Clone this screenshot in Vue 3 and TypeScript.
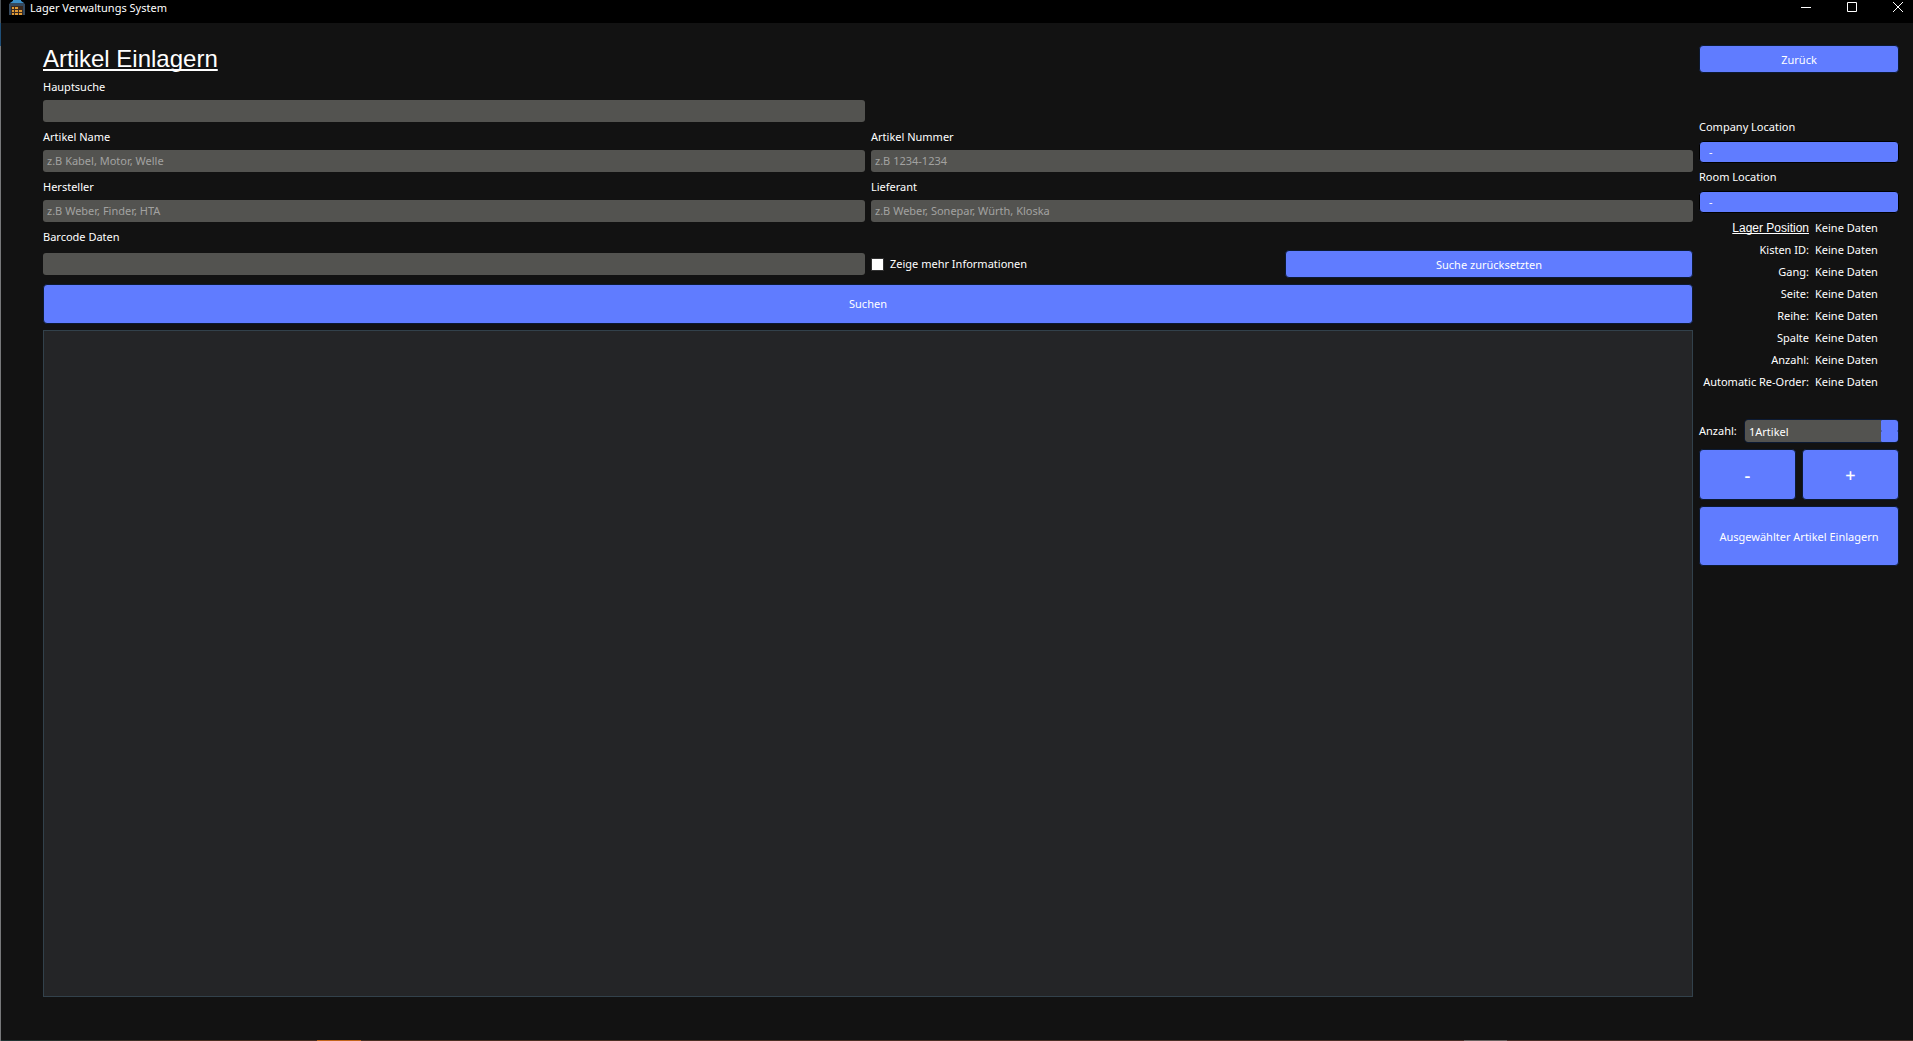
<script setup lang="ts">
import { ref } from 'vue'

interface Detail {
  label: string
  value: string
  heading?: boolean
}

const details: Detail[] = [
  { label: 'Lager Position', value: 'Keine Daten', heading: true },
  { label: 'Kisten ID:', value: 'Keine Daten' },
  { label: 'Gang:', value: 'Keine Daten' },
  { label: 'Seite:', value: 'Keine Daten' },
  { label: 'Reihe:', value: 'Keine Daten' },
  { label: 'Spalte', value: 'Keine Daten' },
  { label: 'Anzahl:', value: 'Keine Daten' },
  { label: 'Automatic Re-Order:', value: 'Keine Daten' },
]

const mainSearch = ref('')
const articleName = ref('')
const articleNumber = ref('')
const manufacturer = ref('')
const supplier = ref('')
const barcode = ref('')
const showMore = ref(false)
const count = ref(1)

function resetSearch(): void {
  for (const field of [mainSearch, articleName, articleNumber, manufacturer, supplier, barcode]) {
    field.value = ''
  }
}

function step(by: number): void {
  count.value = Math.max(1, count.value + by)
}
</script>

<template>
  <div class="window">
    <header class="titlebar">
      <svg class="app-icon" viewBox="0 0 16 16" aria-hidden="true">
        <path d="M0 4 L4 1 V0 H12 V1 L16 4 V15 H0 Z" fill="#34495e" />
        <path d="M1 3 L4 1 V0 H12 V1 L15 3 Z" fill="#3b8fc8" />
        <path d="M2 6 H14 V15 H2 Z" fill="#3a2a20" />
        <path d="M3 7 H5 V9 H3 Z M6 7 H9 V9 H6 Z M3 10 H5 V12 H3 Z M6 10 H9 V12 H6 Z M10 10 H13 V12 H10 Z M3 13 H5 V15 H3 Z M6 13 H9 V15 H6 Z M10 13 H13 V15 H10 Z" fill="#e09a35" />
      </svg>
      <span class="title">Lager Verwaltungs System</span>
      <div class="controls">
        <button type="button" aria-label="Minimieren">
          <svg viewBox="0 0 10 10"><path d="M0 5.5 H10" /></svg>
        </button>
        <button type="button" aria-label="Maximieren">
          <svg viewBox="0 0 10 10"><path d="M0.5 0.5 H9.5 V9.5 H0.5 Z" /></svg>
        </button>
        <button type="button" aria-label="Schließen">
          <svg viewBox="0 0 10 10"><path d="M0 0 L10 10 M10 0 L0 10" /></svg>
        </button>
      </div>
    </header>

    <div class="body">
      <main class="main">
        <h1>Artikel Einlagern</h1>
        <form class="search" @submit.prevent>
          <div class="row">
            <div class="field">
              <label for="main-search">Hauptsuche</label>
              <input id="main-search" v-model="mainSearch" type="text" />
            </div>
          </div>
          <div class="row">
            <div class="field">
              <label for="name">Artikel Name</label>
              <input id="name" v-model="articleName" type="text" placeholder="z.B Kabel, Motor, Welle" />
            </div>
            <div class="field">
              <label for="number">Artikel Nummer</label>
              <input id="number" v-model="articleNumber" type="text" placeholder="z.B 1234-1234" />
            </div>
          </div>
          <div class="row">
            <div class="field">
              <label for="manufacturer">Hersteller</label>
              <input id="manufacturer" v-model="manufacturer" type="text" placeholder="z.B Weber, Finder, HTA" />
            </div>
            <div class="field">
              <label for="supplier">Lieferant</label>
              <input id="supplier" v-model="supplier" type="text" placeholder="z.B Weber, Sonepar, Würth, Kloska" />
            </div>
          </div>
          <div class="field">
            <label for="barcode">Barcode Daten</label>
            <div class="row">
              <input id="barcode" v-model="barcode" type="text" />
              <div class="row">
                <label class="check"><input v-model="showMore" type="checkbox" />Zeige mehr Informationen</label>
                <button class="btn" type="button" @click="resetSearch">Suche zurücksetzten</button>
              </div>
            </div>
          </div>
          <button class="btn submit" type="submit">Suchen</button>
        </form>
        <section class="results" aria-label="Ergebnisse"></section>
      </main>

      <aside class="side">
        <button class="btn back" type="button">Zurück</button>
        <div class="locations">
          <div class="field">
            <label for="company">Company Location</label>
            <select id="company"><option>-</option></select>
          </div>
          <div class="field">
            <label for="room">Room Location</label>
            <select id="room"><option>-</option></select>
          </div>
        </div>
        <table class="details">
          <tbody>
            <tr v-for="d in details" :key="d.label">
              <th scope="row"><span :class="{ heading: d.heading }">{{ d.label }}</span></th>
              <td>{{ d.value }}</td>
            </tr>
          </tbody>
        </table>
        <div class="amount">
          <label for="count">Anzahl:</label>
          <div class="spin">
            <input id="count" type="text" :value="count + 'Artikel'" readonly />
            <div class="spin-buttons">
              <button type="button" aria-label="Mehr" @click="step(1)"></button>
              <button type="button" aria-label="Weniger" @click="step(-1)"></button>
            </div>
          </div>
        </div>
        <div class="steps">
          <button class="btn" type="button" @click="step(-1)">-</button>
          <button class="btn" type="button" @click="step(1)">+</button>
        </div>
        <button class="btn store" type="button">Ausgewählter Artikel Einlagern</button>
      </aside>
    </div>
    <div class="taskbar-edge"></div>
  </div>
</template>

<style>
body {
  background: #121212;
}
</style>

<style scoped>
* {
  box-sizing: border-box;
}

.window {
  display: flex;
  flex-direction: column;
  min-height: 100vh;
  padding-left: 1px;
  background:
    linear-gradient(#4d5358 23px, #1f4f78 23px, #1f4f78 46px, #77787a 46px) left top / 1px 100% no-repeat,
    #121212;
  color: #fff;
  font: 11px/16px 'Noto Sans', 'Open Sans', sans-serif;
}

button,
input,
select {
  margin: 0;
  color: inherit;
  font: inherit;
}

.titlebar {
  display: flex;
  align-items: flex-start;
  height: 23px;
  padding-left: 8px;
  background: #000;
}

.app-icon {
  width: 16px;
  height: 16px;
}

.title {
  margin-left: 5px;
}

.controls {
  display: flex;
  margin-left: auto;
}

.controls button {
  display: flex;
  width: 46px;
  height: 14px;
  padding: 2px 0 0 26px;
  border: 0;
  background: none;
}

.controls svg {
  width: 10px;
  height: 10px;
  fill: none;
  stroke: #fff;
  overflow: visible;
}

.body {
  display: flex;
  flex: 1;
  gap: 6px;
  padding: 22px 14px 43px 42px;
}

.main {
  display: flex;
  flex: 1;
  flex-direction: column;
  gap: 6px;
}

h1 {
  margin: 0;
  font: 24px/27px 'Liberation Sans', Arial, sans-serif;
  text-decoration: underline;
  text-decoration-thickness: 2px;
  text-underline-offset: 2px;
  text-decoration-skip-ink: none;
}

.search,
.field,
.locations {
  display: flex;
  flex-direction: column;
  gap: 6px;
}

.search label {
  height: 16px;
  line-height: 18px;
}

.row {
  display: grid;
  grid-template-columns: repeat(2, minmax(0, 1fr));
  align-items: center;
  gap: 6px;
}

input[type='text'] {
  height: 22px;
  padding: 0 4px 1px;
  border: 0;
  border-radius: 3px;
  outline: 0;
  background: #535350;
}

input::placeholder {
  color: #a2a2a0;
  opacity: 1;
}

.check {
  display: flex;
  align-items: center;
  gap: 6px;
}

.check input {
  width: 13px;
  height: 13px;
  border: 1px solid #333;
  background: #fff;
  appearance: none;
}

.check input:checked {
  background: #607cff;
}

.btn {
  height: 28px;
  padding: 1px 0 0;
  border: 1px solid #0c1a33;
  border-radius: 4px;
  background: #607cff;
}

.submit {
  height: 40px;
  padding: 0;
}

.results {
  flex: 1;
  border: 1px solid #32414b;
  background: #242527;
}

.side {
  display: flex;
  flex-direction: column;
  width: 200px;
}

.back {
  margin-bottom: 46px;
}

select {
  height: 22px;
  padding: 0 9px;
  border: 1px solid #000;
  border-radius: 4px;
  background: #607cff;
  appearance: none;
}

.details {
  margin-top: 4px;
  border-collapse: collapse;
}

.details th,
.details td {
  height: 22px;
  padding: 0;
  font-weight: 400;
  line-height: 16px;
  white-space: nowrap;
}

.details th {
  width: 110px;
  text-align: right;
}

.details td {
  padding-left: 6px;
}

.heading {
  font: 12px/16px 'Liberation Sans', Arial, sans-serif;
  text-decoration: underline;
  text-underline-offset: 1px;
  text-decoration-skip-ink: none;
}

.amount {
  display: flex;
  align-items: center;
  justify-content: space-between;
  margin: 26px 0 6px;
}

.spin {
  display: flex;
  width: 155px;
  height: 24px;
  border: 1px solid #0c1a33;
  border-radius: 4px;
  overflow: hidden;
}

.spin input[type='text'] {
  flex: 1;
  min-width: 0;
  padding-bottom: 0;
  border-radius: 2px 0 0 2px;
}

.spin-buttons {
  display: flex;
  flex-direction: column;
  width: 17px;
}

.spin-buttons button {
  flex: 1;
  padding: 0;
  border: 0;
  border-radius: 1px;
  background: #607cff;
}

.steps {
  display: flex;
  gap: 6px;
  margin-bottom: 6px;
}

.steps .btn {
  flex: 1;
  height: 51px;
  padding: 0;
  font-size: 18px;
  font-weight: 500;
}

.store {
  height: 60px;
}

.taskbar-edge {
  flex: none;
  height: 1px;
  background:
    linear-gradient(#c4651c, #c4651c) 316px 0 / 44px 1px no-repeat,
    linear-gradient(#6a6260, #6a6260) right 406px top 0 / 43px 1px no-repeat,
    linear-gradient(90deg, #1e3333, #4a2f22 10%, #4a2f2a);
}
</style>
